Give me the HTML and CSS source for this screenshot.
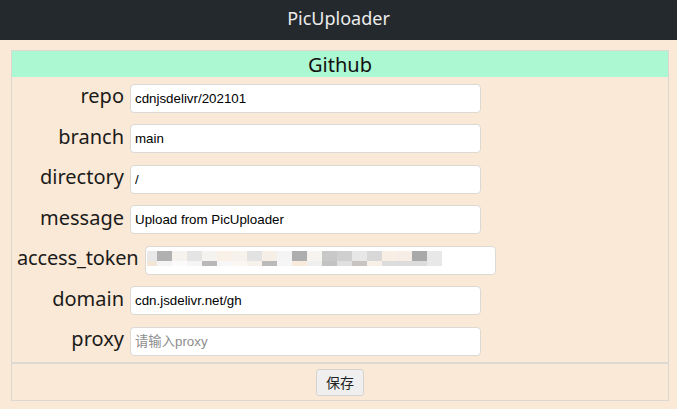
FILE: index.html
```html
<!DOCTYPE html>
<html lang="zh">
<head>
<meta charset="utf-8">
<title>PicUploader</title>
<link rel="stylesheet" href="styles.css">
</head>
<body>
<header class="topbar">PicUploader</header>
<section class="panel">
  <div class="panel-title">Github</div>
  <div class="rows">
    <div class="row"><label class="lbl">repo</label><input class="field" type="text" value="cdnjsdelivr/202101"></div>
    <div class="row"><label class="lbl">branch</label><input class="field" type="text" value="main"></div>
    <div class="row"><label class="lbl">directory</label><input class="field" type="text" value="/"></div>
    <div class="row"><label class="lbl">message</label><input class="field" type="text" value="Upload from PicUploader"></div>
    <div class="row"><label class="lbl lbl-long">access_token</label><div class="field token"><div class="mosaic"><div class="m-top"></div><div class="m-bot"></div></div></div></div>
    <div class="row"><label class="lbl">domain</label><input class="field" type="text" value="cdn.jsdelivr.net/gh"></div>
    <div class="row"><label class="lbl">proxy</label><input class="field" type="text" placeholder="请输入proxy"></div>
  </div>
  <div class="panel-foot"><button class="btn" type="button">保存</button></div>
</section>
</body>
</html>
```

FILE: styles.css
```css
html, body {
  margin: 0;
  padding: 0;
}
body {
  background: #fae9d6;
  font-family: "Noto Sans", "Noto Sans CJK SC", sans-serif;
  color: #1b1b1b;
  min-height: 409px;
}
.topbar {
  height: 40px;
  background: #24292d;
  color: #ececec;
  font-size: 18px;
  line-height: 36px;
  text-align: center;
}
.panel {
  margin: 10px 8px 0 11px;
  border: 1px solid #dcd7d0;
}
.panel-title {
  background: #acf8d2;
  height: 26px;
  line-height: 28px;
  font-size: 20px;
  text-align: center;
  color: #111;
}
.rows {
  display: flex;
  flex-direction: column;
  padding-top: 1px;
}
.row {
  display: flex;
  align-items: center;
  height: 40.5px;
  padding-left: 5px;
  gap: 6px;
}
.lbl {
  min-width: 107px;
  text-align: right;
  font-size: 20px;
  line-height: 28px;
  position: relative;
  top: -2px;
  white-space: nowrap;
}
.lbl-long {
  letter-spacing: -0.15px;
}
.field {
  box-sizing: border-box;
  width: 351px;
  height: 29px;
  background: #fff;
  border: 1px solid #dcd9d5;
  border-radius: 4px;
  padding: 0 4px;
  font-family: "Liberation Sans", Arial, "Noto Sans CJK SC", sans-serif;
  font-size: 13.333px;
  color: #000;
  outline: none;
  flex: none;
}
.field::placeholder {
  color: #8d8d8d;
  font-family: "Liberation Sans", "Noto Sans CJK SC", sans-serif;
}
.token {
  padding: 4px 0 0 1px;
}
.mosaic {
  width: 295px;
}
.m-top, .m-bot {
  background: linear-gradient(to right,
    #e8e8e8 0 10px, #b0b0b0 10px 25px, #f6f3ef 25px 40px, #e4e4e4 40px 55px,
    #f5f3f0 55px 70px, #f9f1e8 70px 85px, #f8f2ec 85px 100px, #e2e2e2 100px 115px,
    #f5efe8 115px 130px, #f4f4f4 130px 145px, #aeaeae 145px 160px, #f7f3ef 160px 175px,
    #c8c8c8 175px 190px, #cfcfcf 190px 205px, #e7e7e7 205px 220px, #d8d8d8 220px 235px,
    #f8eee4 235px 250px, #f6eee6 250px 265px, #a9a9a9 265px 280px, #e8e8e8 280px 295px);
}
.m-top {
  height: 10px;
}
.m-bot {
  height: 5px;
  background: linear-gradient(to right,
    #f3e5d8 0 10px, #f4f4f4 10px 25px, #fbfbfb 25px 40px, #f5f5f5 40px 55px,
    #b9b9b9 55px 70px, #f7f7f7 70px 85px, #faf6f2 85px 100px, #f6f1eb 100px 115px,
    #bababa 115px 130px, #f6f6f6 130px 145px, #f9ebdb 145px 160px, #efefef 160px 175px,
    #c2c2c2 175px 190px, #e0e0e0 190px 205px, #c8c4c2 205px 220px, #f8efe6 220px 235px,
    #dcdcdc 235px 250px, #dcdcdc 250px 265px, #dcdcdc 265px 280px, #e8e8e8 280px 295px);
}
.panel-foot {
  border-top: 2px solid #dcd8d2;
  display: flex;
  justify-content: center;
  align-items: flex-start;
  height: 38px;
  box-sizing: border-box;
  padding-top: 5px;
}
.btn {
  box-sizing: border-box;
  width: 48px;
  height: 27px;
  line-height: 25px;
  background: #efefef;
  border: 1px solid #d6d3cf;
  border-radius: 3px;
  font-family: "Noto Sans CJK SC", sans-serif;
  font-size: 14px;
  color: #222;
  padding: 0;
}
```
